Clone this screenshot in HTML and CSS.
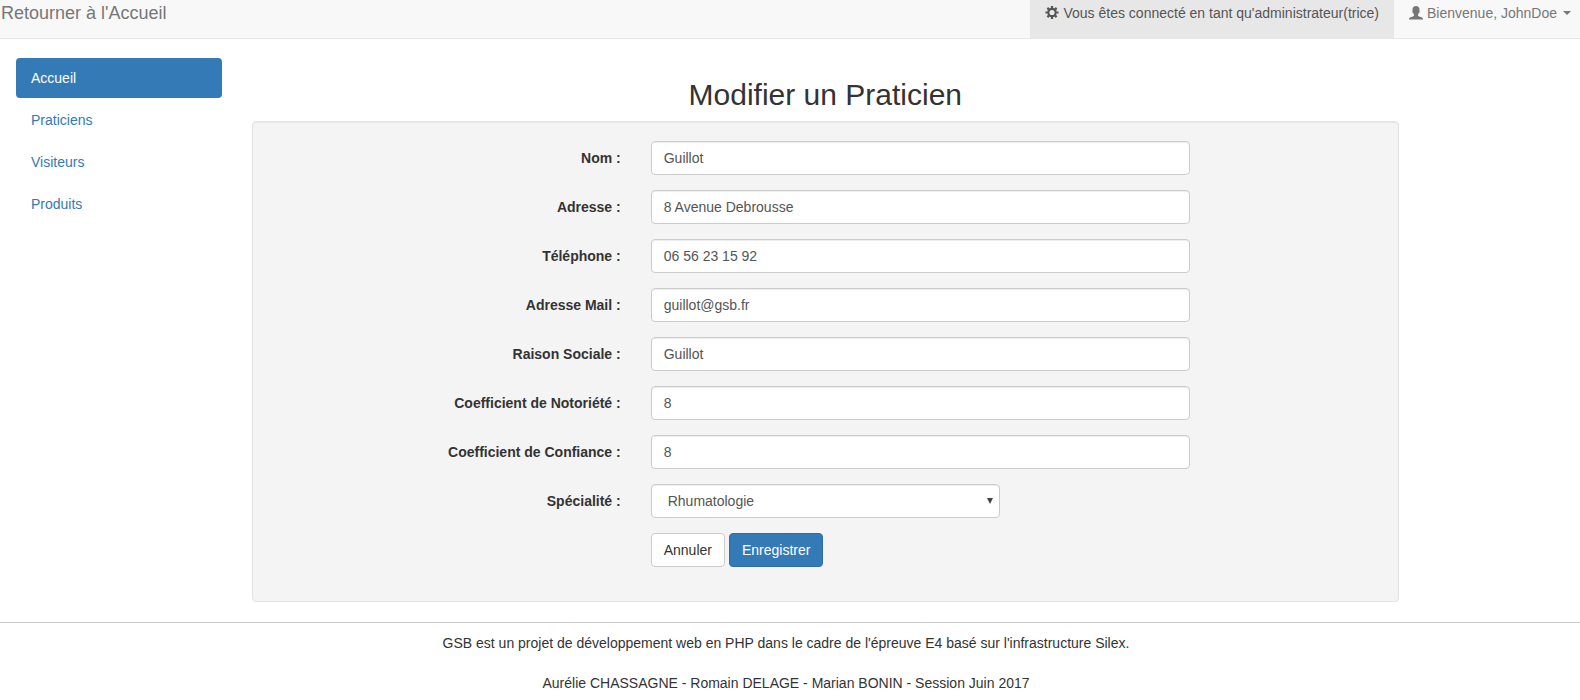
FILE: index.html
```html
<!DOCTYPE html>
<html lang="fr">
<head>
<meta charset="utf-8">
<meta name="viewport" content="width=device-width, initial-scale=1">
<title>Modifier un Praticien</title>
<link rel="stylesheet" href="styles.css">
</head>
<body>
<header class="navbar">
  <a class="brand" href="#">Retourner à l'Accueil</a>
  <nav class="navbar-links">
    <a class="navbar-link current" href="#">
      <svg class="icon" viewBox="0 0 14 14" aria-hidden="true"><g fill="none" stroke="currentColor"><circle cx="7" cy="6.500" r="3.700" stroke-width="2.200"/><path stroke-width="2.200" d="M7 0v2.200M7 10.800V13M.5 6.500h2.200M11.300 6.500h2.200M2.400 1.900L4 3.500M10 9.500l1.600 1.600M2.400 11.100L4 9.500M10 3.500l1.600-1.600"/></g></svg>
      Vous êtes connecté en tant qu'administrateur(trice)
    </a>
    <a class="navbar-link" href="#">
      <svg class="icon" viewBox="0 0 14 14" aria-hidden="true"><path fill="currentColor" d="M7 0C9.200 0 10.500 1.300 10.500 3.300c0 .6-.1 1-.1 1.400.4.1.4.5.3 1-.1.600-.3 1-.7 1.100-.2.800-.6 1.400-1 1.800v.9c.1.500.5.700 1.100.9l2.300.8c1 .4 1.500.9 1.600 1.700V13.500H0v-.6c.1-.8.6-1.300 1.600-1.700l2.300-.8c.6-.2 1-.4 1.100-.9V8.600c-.4-.4-.8-1-1-1.800-.4-.1-.6-.5-.7-1.100-.1-.5-.1-.9.3-1 0-.4-.1-.8-.1-1.400C3.500 1.300 4.800 0 7 0z"/></svg>
      Bienvenue, JohnDoe
      <span class="caret"></span>
    </a>
  </nav>
</header>

<div class="layout">
  <nav class="sidebar">
    <a class="pill active" href="#">Accueil</a>
    <a class="pill" href="#">Praticiens</a>
    <a class="pill" href="#">Visiteurs</a>
    <a class="pill" href="#">Produits</a>
  </nav>
  <main class="content">
    <h2 class="title">Modifier un Praticien</h2>
    <form class="well">
      <div class="row"><label class="label" for="nom">Nom :</label><div class="field"><input class="control" id="nom" type="text" value="Guillot"></div></div>
      <div class="row"><label class="label" for="adresse">Adresse :</label><div class="field"><input class="control" id="adresse" type="text" value="8 Avenue Debrousse"></div></div>
      <div class="row"><label class="label" for="telephone">Téléphone :</label><div class="field"><input class="control" id="telephone" type="text" value="06 56 23 15 92"></div></div>
      <div class="row"><label class="label" for="mail">Adresse Mail :</label><div class="field"><input class="control" id="mail" type="text" value="guillot@gsb.fr"></div></div>
      <div class="row"><label class="label" for="raison">Raison Sociale :</label><div class="field"><input class="control" id="raison" type="text" value="Guillot"></div></div>
      <div class="row"><label class="label" for="notoriete">Coefficient de Notoriété :</label><div class="field"><input class="control" id="notoriete" type="text" value="8"></div></div>
      <div class="row"><label class="label" for="confiance">Coefficient de Confiance :</label><div class="field"><input class="control" id="confiance" type="text" value="8"></div></div>
      <div class="row">
        <label class="label" for="specialite">Spécialité :</label>
        <div class="field short">
          <div class="select-wrap">
            <select class="control select" id="specialite"><option>Rhumatologie</option></select>
            <svg class="arrow" viewBox="0 0 6 6" aria-hidden="true"><path fill="#444" d="M0 0h6L3 6z"/></svg>
          </div>
        </div>
      </div>
      <div class="row">
        <div class="field buttons">
          <button class="btn" type="button">Annuler</button>
          <button class="btn primary" type="submit">Enregistrer</button>
        </div>
      </div>
    </form>
  </main>
</div>

<footer class="footer">
  <p>GSB est un projet de développement web en PHP dans le cadre de l'épreuve E4 basé sur l'infrastructure Silex.</p>
  <p>Aurélie CHASSAGNE - Romain DELAGE - Marian BONIN - Session Juin 2017</p>
</footer>
</body>
</html>
```

FILE: styles.css
```css
* {
  box-sizing: border-box;
}

body {
  margin: 0;
  background: #fff;
  color: #333;
  font: 14px/20px "Liberation Sans", Arial, sans-serif;
}

a {
  color: #337ab7;
  text-decoration: none;
}

.navbar {
  display: flex;
  justify-content: space-between;
  background: #f8f8f8;
  border-bottom: 1px solid #e7e7e7;
}

.brand {
  padding: 3px 0 15px 1px;
  color: #777;
  font-size: 18px;
}

.navbar-links {
  display: flex;
}

.navbar-link {
  display: flex;
  align-items: center;
  gap: 4px;
  padding: 3px 15px 15px;
  color: #777;
}

.navbar-link:last-child {
  padding-right: 9px;
}

.navbar-link.current {
  background: #e7e7e7;
  color: #555;
}

.icon {
  width: 14px;
  height: 14px;
}

.caret {
  margin-left: 2px;
  border-top: 4px solid;
  border-right: 4px solid transparent;
  border-left: 4px solid transparent;
}

.layout {
  display: grid;
  grid-template-columns: minmax(0, 1fr) minmax(0, 5fr);
  margin: 19px 10.5% 20px 1px;
}

.sidebar {
  display: flex;
  flex-direction: column;
  gap: 2px;
  padding: 0 15px;
}

.pill {
  padding: 10px 15px;
  border-radius: 4px;
}

.pill.active {
  background: #337ab7;
  color: #fff;
}

.content {
  padding: 0 15px;
}

.title {
  margin: 20px 0 10px;
  font-size: 30px;
  font-weight: 500;
  line-height: 33px;
  text-align: center;
}

.well {
  padding: 19px 4px 34px;
  border: 1px solid #e3e3e3;
  border-radius: 4px;
  background: #f4f4f4;
  box-shadow: inset 0 1px 1px rgba(0, 0, 0, 0.05);
}

.row {
  display: grid;
  grid-template-columns: repeat(12, minmax(0, 1fr));
}

.row + .row {
  margin-top: 15px;
}

.label {
  grid-column: 1 / span 4;
  padding: 7px 15px 0;
  font-weight: 700;
  text-align: right;
}

.field {
  grid-column: 5 / span 6;
  padding: 0 15px;
}

.field.short {
  grid-column: 5 / span 4;
}

.control {
  display: block;
  width: 100%;
  height: 34px;
  padding: 6px 12px;
  border: 1px solid #ccc;
  border-radius: 4px;
  background: #fff;
  box-shadow: inset 0 1px 1px rgba(0, 0, 0, 0.075);
  color: #555;
  font: inherit;
}

.select-wrap {
  position: relative;
}

.select {
  padding-left: 16px;
  appearance: none;
}

.arrow {
  position: absolute;
  top: 14px;
  right: 7px;
  width: 6px;
  height: 6px;
  pointer-events: none;
}

.buttons {
  display: flex;
  gap: 4px;
}

.btn {
  padding: 6px 12px;
  border: 1px solid #ccc;
  border-radius: 4px;
  background: #fff;
  color: #333;
  font: inherit;
}

.btn.primary {
  border-color: #2e6da4;
  background: #337ab7;
  color: #fff;
}

.footer {
  padding: 10px 8px 7px 0;
  border-top: 1px solid #ccc;
  text-align: center;
}

.footer p {
  margin: 0;
}

.footer p + p {
  margin-top: 20px;
}
```
